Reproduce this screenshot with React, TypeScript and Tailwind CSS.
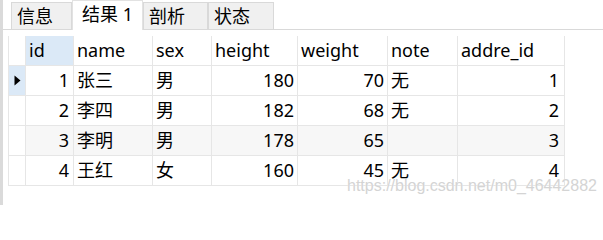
import { Fragment } from 'react'

interface Row {
  id: number
  name: string
  sex: string
  height: number
  weight: number
  note: string
  addreId: number
}

const rows: Row[] = [
  { id: 1, name: '张三', sex: '男', height: 180, weight: 70, note: '无', addreId: 1 },
  { id: 2, name: '李四', sex: '男', height: 182, weight: 68, note: '无', addreId: 2 },
  { id: 3, name: '李明', sex: '男', height: 178, weight: 65, note: '', addreId: 3 },
  { id: 4, name: '王红', sex: '女', height: 160, weight: 45, note: '无', addreId: 4 }
]

const cell = 'h-full shrink-0 border-r border-[#e6e6e6] flex items-center whitespace-nowrap'

function Tab({ label, active, width }: { label: string; active?: boolean; width: string }) {
  if (active) {
    return (
      <div
        className={`${width} h-[30px] -mb-px bg-white border-x border-t border-[#e2e2e2] flex items-center pl-[9px] pb-[3px] text-black`}
      >
        {label}
      </div>
    )
  }
  return (
    <div
      className={`${width} h-[27px] bg-[#f0f0f0] border-x border-t border-[#d9d9d9] flex items-center pl-[5px] text-black`}
    >
      {label}
    </div>
  )
}

function Indicator() {
  return (
    <svg width="7" height="11" viewBox="0 0 7 11">
      <path d="M0.5 0.5 L6.5 5.5 L0.5 10.5 Z" fill="#000" />
    </svg>
  )
}

export default function App() {
  return (
    <div className='relative w-[603px] h-[205px] bg-white flex overflow-hidden font-["Noto_Sans","Noto_Sans_CJK_SC",sans-serif] text-[18px] text-black'>
      <div className="w-[3px] shrink-0 bg-[#dadada]" />
      <div className="flex-1 flex flex-col">
        <div className="h-[30px] shrink-0 flex items-end pl-[8px] border-b border-[#d9d9d9]">
          <Tab label="信息" width="w-[61px]" />
          <Tab label="结果 1" width="w-[71px]" active />
          <Tab label="剖析" width="w-[65px]" />
          <Tab label="状态" width="w-[66px]" />
        </div>

        <div className="mt-[6px] ml-[5px] flex flex-col w-[557px] border-l border-[#e6e6e6]">
          <div className="h-[30px] flex border-b border-[#e6e6e6]">
            <div className={`${cell} w-[17px]`} />
            <div className={`${cell} w-[48px] bg-[#dbe9f7] pl-[3px]`}>id</div>
            <div className={`${cell} w-[79px] pl-[3px]`}>name</div>
            <div className={`${cell} w-[59px] pl-[3px]`}>sex</div>
            <div className={`${cell} w-[86px] pl-[3px]`}>height</div>
            <div className={`${cell} w-[90px] pl-[3px]`}>weight</div>
            <div className={`${cell} w-[70px] pl-[3px]`}>note</div>
            <div className={`${cell} w-[107px] pl-[3px]`}>addre_id</div>
          </div>

          {rows.map((r, i) => (
            <Fragment key={r.id}>
              <div
                className={`h-[30px] flex border-b border-[#e6e6e6] ${i === 2 ? 'bg-[#f7f7f7]' : 'bg-white'}`}
              >
                <div
                  className={`${cell} w-[17px] justify-center ${i === 0 ? 'bg-[#dbe9f7]' : 'bg-white'}`}
                >
                  {i === 0 && <Indicator />}
                </div>
                <div className={`${cell} w-[48px] justify-end pr-[4px]`}>{r.id}</div>
                <div className={`${cell} w-[79px] pl-[3px]`}>{r.name}</div>
                <div className={`${cell} w-[59px] pl-[3px]`}>{r.sex}</div>
                <div className={`${cell} w-[86px] justify-end pr-[3px]`}>{r.height}</div>
                <div className={`${cell} w-[90px] justify-end pr-[3px]`}>{r.weight}</div>
                <div className={`${cell} w-[70px] pl-[3px]`}>{r.note}</div>
                <div className={`${cell} w-[107px] justify-end pr-[5px]`}>{r.addreId}</div>
              </div>
            </Fragment>
          ))}
        </div>
      </div>

      <div className='absolute left-[347px] top-[176px] font-["Liberation_Sans",Arial,sans-serif] text-[16px] leading-[20px] text-[#d4d4d4] [text-shadow:0_0_1px_#fff]'>
        https://blog.csdn.net/m0_46442882
      </div>
    </div>
  )
}
